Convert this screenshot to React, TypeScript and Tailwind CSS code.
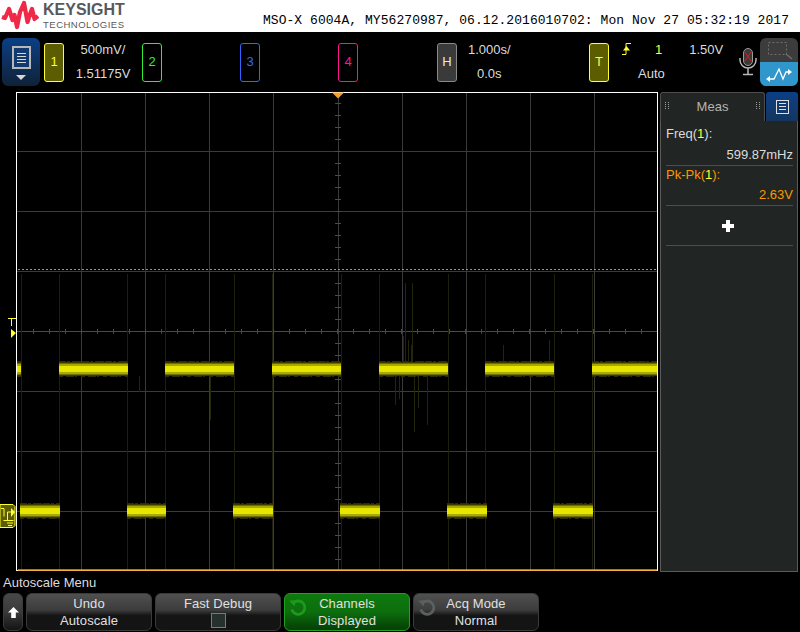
const mono = "font-['Liberation_Mono',monospace]";

const verticals = [81, 145, 209, 273, 338, 402, 466, 530, 594];
const horizontals = [151, 211, 271, 391, 451, 511];
const topEdges = [21, 59, 127, 165, 234, 272, 341, 379, 448, 485, 554, 592];
const topRuns = [[17, 21], [59, 128], [165, 234], [272, 341], [379, 448], [485, 554], [592, 657]];
const lowRuns = [[20, 60], [127, 166], [233, 273], [340, 380], [447, 487], [553, 593]];
// the stray glitches around the fourth pulse
const spikes = [
  [405, 283, 362], [412, 283, 362], [403, 336, 362], [408, 340, 362], [411, 345, 362],
  [395, 376, 405], [399, 376, 399], [414, 376, 432], [418, 376, 408], [427, 376, 425],
  [503, 345, 362], [549, 340, 362], [139, 376, 392], [210, 376, 420],
];

function Trace({ runs, y }: { runs: number[][]; y: number }) {
  return (
    <g>
      {runs.map(([a, b]) => (
        <g key={a}>
          {/* noisy fringe, broken up so it does not read as a solid edge */}
          <line x1={a} y1={y - 7.5} x2={b} y2={y - 7.5} stroke="#2e2e00" strokeDasharray="7 1 3 2 9 1" />
          <line x1={a} y1={y + 7.5} x2={b} y2={y + 7.5} stroke="#2e2e00" strokeDasharray="4 3 8 1 2 4" />
          <rect x={a} y={y - 7} width={b - a} height={14} fill="#3a3a00" />
          <rect x={a} y={y - 6} width={b - a} height={12} fill="#6e6e00" />
          <rect x={a} y={y - 5} width={b - a} height={10} fill="#a8a800" />
          <rect x={a} y={y - 3} width={b - a} height={6} fill="#e6e600" />
        </g>
      ))}
    </g>
  );
}

function Scope() {
  const xTicks = Array.from({ length: 39 }, (_, i) => 33 + i * 16);
  const yTicks = Array.from({ length: 39 }, (_, i) => 103 + i * 12);
  return (
    <svg viewBox="0 92 658 480" className="w-[658px] h-[480px] block shrink-0">
      <rect x="0" y="92" width="658" height="480" fill="#000" />
      {verticals.map((x) => (
        <line key={x} x1={x + 0.5} y1="93" x2={x + 0.5} y2="570" stroke="#3a3a3a" />
      ))}
      {horizontals.map((y) => (
        <line key={y} x1="17" y1={y + 0.5} x2="657" y2={y + 0.5} stroke="#3a3a3a" />
      ))}
      <line x1="17" y1="331.5" x2="657" y2="331.5" stroke="#4a4a4a" />
      {xTicks.map((x) => (
        <line key={x} x1={x + 0.5} y1="329" x2={x + 0.5} y2="334" stroke="#4a4a4a" />
      ))}
      {yTicks.map((y) => (
        <line key={y} x1="335" y1={y + 0.5} x2="341" y2={y + 0.5} stroke="#4a4a4a" />
      ))}
      {topEdges.map((x) => (
        <line key={x} x1={x + 0.5} y1="274" x2={x + 0.5} y2="570" stroke="#1e1e0a" />
      ))}
      {spikes.map(([x, a, b], i) => (
        <line key={i} x1={x + 0.5} y1={a} x2={x + 0.5} y2={b} stroke="#25250c" />
      ))}
      <line x1="18" y1="269.5" x2="657" y2="269.5" stroke="#d98a1c" strokeDasharray="2 2" />
      <Trace runs={topRuns} y={369} />
      <Trace runs={lowRuns} y={511} />
      {/* frame */}
      <rect x="16.5" y="92.5" width="641" height="478" fill="none" stroke="#fff" />
      <line x1="18" y1="570" x2="657" y2="570" stroke="#f59a00" strokeWidth="1.5" />
      <path d="M332 92.5h12l-6 6z" fill="#f5a020" />
      {/* trigger level marker */}
      <path d="M8 318.5h8M11.5 319v7" stroke="#ffff33" fill="none" />
      <path d="M11 329l5 4-5 5z" fill="#ffff33" />
      {/* channel 1 ground marker */}
      <path d="M0 504.5h13l2 2v19l-2 2H0z" fill="#5c5c00" stroke="#ffff33" />
      <path d="M1 508.5h3v8M7 523h6M8 525.5h4M3.5 520.5h10M7.5 520v-8h4" stroke="#ffff33" fill="none" />
      <path d="M11 508l4 4-4 5z" fill="#ffff33" />
    </svg>
  );
}

function Logo() {
  return (
    <svg viewBox="0 0 38 30" className="w-[38px] h-[30px] shrink-0">
      <path
        d="M1 17L4 18L8 9L11.5 20L13.5 15L16 27L19 12L23 3L26.5 22L29 14L31 9L33.5 19L37 16"
        fill="none"
        stroke="#ee2a48"
        strokeWidth="4.2"
        strokeLinejoin="round"
      />
    </svg>
  );
}

function ChannelBox({ label, color, filled }: { label: string; color: string; filled?: boolean }) {
  return (
    <div
      className={`w-5 h-[39px] rounded-[3px] border flex items-center justify-center text-[13px] shrink-0 ${color} ${filled ? "bg-[#5c5c00]" : ""}`}
    >
      {label}
    </div>
  );
}

function Readout({ top, bottom, className }: { top: string; bottom: string; className: string }) {
  return (
    <div className={`flex flex-col gap-[7px] leading-[17px] text-[13px] text-[#dcdcdc] -mt-[2px] ${className}`}>
      <span>{top}</span>
      <span>{bottom}</span>
    </div>
  );
}

function StatusBar() {
  return (
    <div className="h-[60px] bg-black flex items-center pl-[2px] text-[#dcdcdc]">
      <div className="w-[38px] h-[48px] rounded-md bg-gradient-to-b from-[#0a3f86] to-[#0e2238] flex flex-col items-center pt-2 gap-[3px] mr-1 shrink-0">
        <div className="w-[19px] h-[23px] border-2 border-[#b8b8b8] bg-[#123a70] flex flex-col justify-center gap-[2px] px-[3px]">
          <div className="h-px bg-[#d8d8d8]" />
          <div className="h-px bg-[#d8d8d8]" />
          <div className="h-px bg-[#d8d8d8]" />
          <div className="h-px bg-[#d8d8d8]" />
        </div>
        <div className="w-0 h-0 border-x-[5px] border-x-transparent border-t-[5px] border-t-[#d8d8d8] mt-[3px]" />
      </div>
      <div className="w-[98px] flex items-center shrink-0">
        <ChannelBox label="1" color="border-[#ffff33] text-[#ffff33]" filled />
        <Readout top="500mV/" bottom="1.51175V" className="w-[78px] items-center" />
      </div>
      <div className="w-[98px] shrink-0"><ChannelBox label="2" color="border-[#33ee33] text-[#33ee33]" /></div>
      <div className="w-[98px] shrink-0"><ChannelBox label="3" color="border-[#3366ff] text-[#3366ff]" /></div>
      <div className="w-[99px] shrink-0"><ChannelBox label="4" color="border-[#ff1493] text-[#ff1493]" /></div>
      <div className="w-[152px] flex items-center shrink-0">
        <div className="w-5 h-[39px] rounded-[3px] border border-[#8a8a8a] bg-[#3a3a3a] flex items-center justify-center text-[13px] text-[#e8e8e8] shrink-0">H</div>
        <Readout top="1.000s/" bottom="0.0s" className="items-start pl-[11px] [&>span:last-child]:pl-[9px]" />
      </div>
      <div className="flex items-center w-[151px] shrink-0">
        <ChannelBox label="T" color="border-[#ffff33] text-[#ffff33]" filled />
        <div className="flex flex-col gap-[7px] leading-[17px] text-[13px] w-[131px] -mt-[2px]">
          <div className="flex items-center">
            <svg viewBox="0 0 10 12" className="w-[10px] h-3 ml-[13px] shrink-0">
              <path d="M0 11.5h4V.5h5" fill="none" stroke="#ffff33" />
              <path d="M1 7.5h7L4.5 3z" fill="#ffff33" />
            </svg>
            <span className="text-[#ffff33] ml-[23px]">1</span>
            <span className="ml-[27px]">1.50V</span>
          </div>
          <span className="pl-[29px]">Auto</span>
        </div>
      </div>
      <svg viewBox="0 0 18 28" className="w-[18px] h-[28px] shrink-0 -ml-[1px]">
        <rect x="4.5" y="0.5" width="9" height="17" rx="4.5" fill="#3a3a3a" stroke="#9a9a9a" />
        <path d="M6 4l6 9M12 4l-6 9" stroke="#d81e1e" />
        <path d="M1 10v2a8 8 0 0 0 16 0v-2M9 20v6M4 26.5h10" fill="none" stroke="#b8b8b8" strokeWidth="1.5" />
      </svg>
      <div className="w-[38px] h-[48px] rounded-md overflow-hidden flex flex-col ml-[3px] shrink-0">
        <div className="h-[24px] bg-[#3c3c3c] flex items-center justify-center">
          <svg viewBox="0 0 28 20" className="w-7 h-5">
            <rect x="3.5" y="2.5" width="18" height="12" fill="none" stroke="#6e6e6e" strokeDasharray="2 2" />
            <path d="M21 14l6 5" stroke="#6e6e6e" strokeWidth="1.5" />
          </svg>
        </div>
        <div className="flex-1 bg-[#2f97cc] flex items-center justify-center">
          <svg viewBox="0 0 28 20" className="w-7 h-5">
            <path d="M4 15h5l5-10 4 10 3-7h4" fill="none" stroke="#fff" strokeWidth="1.3" />
            <path d="M1 15l4-3v6zM27 8l-4-3v6z" fill="#fff" />
          </svg>
        </div>
      </div>
    </div>
  );
}

function MeasPanel() {
  return (
    <div className="w-[138px] h-[480px] ml-[2px] mr-[2px] flex flex-col text-[13px] shrink-0 leading-4 bg-[#212524]">
      <div className="h-[29px] flex bg-black shrink-0">
        <div className="w-[105px] bg-[#212524] border-t border-x border-[#4d4d4d] rounded-t-[3px] flex items-center justify-center text-[#b4b4b4] relative">
          <div className="absolute left-[4px] top-[9px] w-[4px] h-[7px] border-x border-dotted border-[#9a9a9a]" />
          Meas
          <div className="absolute right-[4px] top-[9px] w-[4px] h-[7px] border-x border-dotted border-[#9a9a9a]" />
        </div>
        <div className="flex-1 ml-px rounded-t-[3px] bg-gradient-to-b from-[#0a3f86] to-[#143660] flex items-center justify-center">
          <div className="w-[13px] h-[14px] border border-[#e0e0e0] flex flex-col justify-center gap-[2px] px-[2px]">
            <div className="h-px bg-[#e0e0e0]" />
            <div className="h-px bg-[#e0e0e0]" />
            <div className="h-px bg-[#e0e0e0]" />
          </div>
        </div>
      </div>
      <div className="flex-1 border-x border-b border-[#5a5a5a] pl-[5px] pr-[4px] pt-[5px] flex flex-col">
        <div className="h-[40px] text-[#dcdcdc] border-b border-[#4d4d4d] flex flex-col justify-between pb-[2px]">
          <span>Freq(<span className="text-[#ffff33]">1</span>):</span>
          <span className="text-right">599.87mHz</span>
        </div>
        <div className="h-[40px] text-[#f59a00] border-b border-[#4d4d4d] flex flex-col justify-between pb-[2px] pt-px">
          <span>Pk-Pk(<span className="text-[#ffff33]">1</span>):</span>
          <span className="text-right">2.63V</span>
        </div>
        <div className="h-[40px] border-b border-[#4d4d4d] flex items-center justify-center pr-[3px]">
          <svg viewBox="0 0 12 12" className="w-3 h-3">
            <path d="M4 0h4v4h4v4H8v4H4V8H0V4h4z" fill="#fff" />
          </svg>
        </div>
      </div>
    </div>
  );
}

function Refresh({ color }: { color: string }) {
  return (
    <svg viewBox="0 0 20 20" className="absolute left-[3px] top-[4px] w-[19px] h-[19px]">
      <path d="M6 5a7 7 0 1 1-2 7" fill="none" stroke={color} strokeWidth="3" />
      <path d="M1 3l7-1-1 7z" fill={color} />
    </svg>
  );
}

function SoftKey({ top, bottom, green, knob, check }: { top: string; bottom?: string; green?: boolean; knob?: boolean; check?: boolean }) {
  const look = green
    ? "bg-gradient-to-b from-[#0d7a0d] via-[#0d6e0d] to-[#053f05] border-[#22a022]"
    : "bg-gradient-to-b from-[#505050] via-[#3c3c3c] via-45% to-[#141414] to-60% border-[#3a3a3a]";
  return (
    <div className={`relative w-[126px] h-[38px] rounded-md border flex flex-col items-center justify-between py-px text-[13px] leading-[17px] text-[#e0e0e0] tracking-[0.1px] shrink-0 ${look}`}>
      {knob && <Refresh color={green ? "#1d9a1d" : "#5a6060"} />}
      <span>{top}</span>
      {check ? <div className="w-[15px] h-[15px] border border-[#7a7a7a] bg-[#26302c] mb-px" /> : <span>{bottom}</span>}
    </div>
  );
}

function SoftKeys() {
  return (
    <div className="h-[60px] bg-black flex flex-col pl-[3px]">
      <div className="text-[13px] leading-4 text-[#dcdcdc] pt-[3px] h-[21px]">Autoscale Menu</div>
      <div className="flex gap-[3px]">
        <div className="w-5 h-[38px] rounded-md bg-gradient-to-b from-[#484848] via-[#3a3a3a] to-[#141414] border border-[#3a3a3a] flex items-center justify-center shrink-0">
          <svg viewBox="0 0 12 12" className="w-[11px] h-[11px]">
            <path d="M6 0l6 6H8.5v6h-5V6H0z" fill="#fff" />
          </svg>
        </div>
        <SoftKey top="Undo" bottom="Autoscale" />
        <SoftKey top="Fast Debug" check />
        <SoftKey top="Channels" bottom="Displayed" green knob />
        <SoftKey top="Acq Mode" bottom="Normal" knob />
      </div>
    </div>
  );
}

export default function App() {
  return (
    <div className="w-[800px] h-[632px] bg-black overflow-hidden flex flex-col font-['Liberation_Sans',Arial,sans-serif]">
      <div className="h-8 bg-white flex items-start shrink-0 relative">
        <div className="ml-[1px]"><Logo /></div>
        <div className="ml-[4px] flex flex-col text-[#58595b]">
          <span className="text-[16px] font-bold leading-[16px] mt-[2px]">KEYSIGHT</span>
          <span className="text-[9.5px] leading-[11px] mt-[1px] tracking-[0.5px]">TECHNOLOGIES</span>
        </div>
        <span className={`absolute right-[11px] top-[13px] text-[13px] leading-4 text-black whitespace-pre tracking-[0.05px] ${mono}`}>
          MSO-X 6004A, MY56270987, 06.12.2016010702: Mon Nov 27 05:32:19 2017
        </span>
      </div>
      <StatusBar />
      <div className="flex h-[480px] shrink-0">
        <Scope />
        <MeasPanel />
      </div>
      <SoftKeys />
    </div>
  );
}
